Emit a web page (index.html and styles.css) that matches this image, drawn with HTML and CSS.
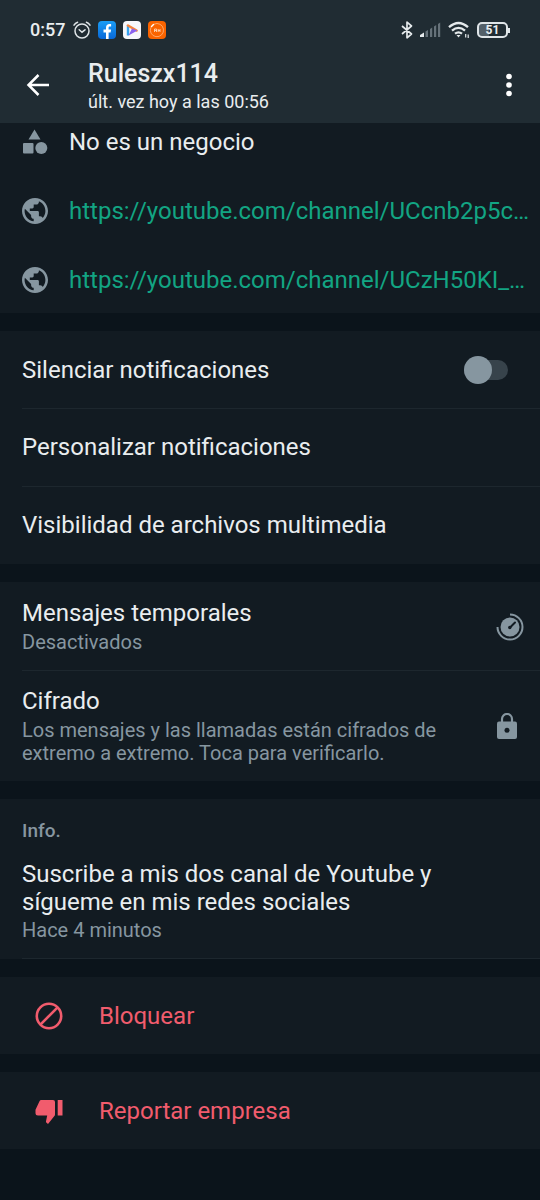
FILE: index.html
```html
<!DOCTYPE html>
<html lang="es">
<head>
<meta charset="utf-8">
<meta name="viewport" content="width=device-width, initial-scale=1">
<title>Ruleszx114</title>
<link rel="stylesheet" href="styles.css">
</head>
<body>
<header class="top">
  <div class="status">
    <div class="status-left">
      <span class="clock">0:57</span>
      <svg class="s18" viewBox="0 0 18 18" fill="none" stroke="#dfe5e8" stroke-width="1.5" stroke-linecap="round"><circle cx="9" cy="10" r="7"/><path d="M6.2 8.800 9 11.200l3-2.400M1 4.200Q2.300 2 4.600 1.200M17 4.200Q15.700 2 13.400 1.200"/></svg>
      <svg class="s18" viewBox="0 0 18 18"><defs><linearGradient id="fb" x2="0" y2="1"><stop stop-color="#1a9df5"/><stop offset="1" stop-color="#0868d8"/></linearGradient></defs><rect width="18" height="18" rx="4" fill="url(#fb)"/><path d="M8 18v-6.500H5.500V8.600H8V6.700C8 4.200 9.400 3 11.500 3l1.600.1v2.500h-1.200c-1 0-1.300.5-1.300 1.300v1.700h2.500l-.5 2.900h-2V18z" fill="#fff"/></svg>
      <svg class="s18" viewBox="0 0 18 18"><rect width="18" height="18" rx="4" fill="#f7f7fa"/><path d="M5 4v10.500" stroke="#36a4ee" stroke-width="2.400"/><path d="M5 4.500 13.500 9.500" stroke="#f5843c" stroke-width="2.600" stroke-linecap="round"/><path d="M5.500 14.500 14.500 9.500 9 7.500z" fill="#8b62ef"/></svg>
      <svg class="s18" viewBox="0 0 18 18"><rect width="18" height="18" rx="4" fill="#fa6400"/><path d="M6 3.200a6.600 6.600 0 1 1-3 3" fill="none" stroke="#ffb880" stroke-width=".8"/><path d="M3.500 5.500 5.500 3.500" stroke="#fff" stroke-width="1.500" stroke-linecap="round"/><path d="M6.500 11V8h2v3M6.500 9.500h2M10.200 8v3M12 8v3M10.200 9.500H12" fill="none" stroke="#ffe0c5" stroke-width=".8"/></svg>
    </div>
    <div class="status-right">
      <svg class="bt" viewBox="0 0 12 18" fill="none" stroke="#e4e9eb" stroke-width="1.700" stroke-linejoin="round"><path d="M1 5l9.500 8L6 16.800V1.200L10.500 5 1 13"/></svg>
      <svg class="signal" viewBox="0 0 21 16"><path d="M0 15v-2l4-2.500V15z" fill="#e4e9eb"/><path d="M5.500 9.500 8 8v7H5.500zM10 7l2.200-1.500V15H10zM14 4.500 16.200 3v12H14zM18 2l2.200-1.500V15H18z" fill="#66727a"/></svg>
      <svg class="wifi" viewBox="0 0 22 18" fill="none" stroke="#e4e9eb" stroke-width="2.300"><path d="M1 6.200q9.500-8.500 19 0M4 9.700q6.500-5.600 13 0M7 12.700q3.500-2.600 7 0"/><path d="M8.500 14h4L10.500 16.500z" fill="#e4e9eb" stroke="none"/><path d="M17.700 13v3.500M20.200 13.500V17" stroke-width="1.200"/></svg>
      <span class="battery"><span class="battery-body">51</span><span class="battery-tip"></span></span>
    </div>
  </div>
  <div class="bar">
    <button class="icon-btn" aria-label="Atrás"><svg class="back" viewBox="0 0 24 24" fill="none" stroke="#fff" stroke-width="2.500"><path d="M23 12H3M12.500 2 2.500 12l10 10"/></svg></button>
    <div class="who"><h1 class="name">Ruleszx114</h1><p class="seen">últ. vez hoy a las 00:56</p></div>
    <button class="icon-btn" aria-label="Más opciones"><svg class="more" viewBox="0 0 6 24" fill="#fff"><circle cx="3" cy="3.500" r="2.800"/><circle cx="3" cy="12" r="2.800"/><circle cx="3" cy="20.500" r="2.800"/></svg></button>
  </div>
</header>
<main class="content">
  <section class="card details">
    <div class="detail"><svg class="s26" viewBox="0 0 26 26" fill="#8696a0"><path d="M12.500 0.500 18.500 10.500h-12z"/><rect x="1" y="14" width="10.500" height="10.500" rx="1"/><circle cx="19.300" cy="19" r="6"/></svg><span>No es un negocio</span></div>
    <div class="detail"><svg class="s26" viewBox="2 2 20 20" fill="#8696a0"><path d="M12 2C6.480 2 2 6.480 2 12s4.480 10 10 10 10-4.480 10-10S17.520 2 12 2zm-1 17.930c-3.950-.49-7-3.850-7-7.930 0-.62.080-1.210.21-1.790L9 15v1c0 1.100.9 2 2 2v1.930zm6.900-2.540c-.26-.81-1-1.390-1.900-1.390h-1v-3c0-.55-.45-1-1-1H8v-2h2c.55 0 1-.45 1-1V7h2c1.100 0 2-.9 2-2v-.41c2.930 1.190 5 4.060 5 7.410 0 2.080-.8 3.970-2.100 5.390z"/></svg><a class="link" href="#">https://youtube.com/channel/UCcnb2p5c…</a></div>
    <div class="detail"><svg class="s26" viewBox="2 2 20 20" fill="#8696a0"><path d="M12 2C6.480 2 2 6.480 2 12s4.480 10 10 10 10-4.480 10-10S17.520 2 12 2zm-1 17.930c-3.950-.49-7-3.850-7-7.930 0-.62.080-1.210.21-1.790L9 15v1c0 1.100.9 2 2 2v1.930zm6.900-2.540c-.26-.81-1-1.390-1.900-1.390h-1v-3c0-.55-.45-1-1-1H8v-2h2c.55 0 1-.45 1-1V7h2c1.100 0 2-.9 2-2v-.41c2.930 1.190 5 4.060 5 7.410 0 2.080-.8 3.970-2.100 5.390z"/></svg><a class="link" href="#">https://youtube.com/channel/UCzH50KI_…</a></div>
  </section>
  <section class="card">
    <label class="row" for="mute"><span>Silenciar notificaciones</span><input class="switch" id="mute" type="checkbox" role="switch"></label>
    <button class="row">Personalizar notificaciones</button>
    <button class="row">Visibilidad de archivos multimedia</button>
  </section>
  <section class="card">
    <button class="row two-line"><span class="texts"><span>Mensajes temporales</span><span class="sub">Desactivados</span></span><svg class="timer" viewBox="0 0 28 28"><path d="M14 1.500A12.500 12.500 0 1 1 1.500 14" fill="none" stroke="#8696a0" stroke-width="2"/><circle cx="14" cy="14" r="9.500" fill="#8696a0"/><path d="M14 14.500 19 9.500" stroke="#121b22" stroke-width="2" stroke-linecap="round"/><circle cx="13.800" cy="14.500" r="1.700" fill="#121b22"/></svg></button>
    <button class="row two-line"><span class="texts"><span>Cifrado</span><span class="sub">Los mensajes y las llamadas están cifrados de extremo a extremo. Toca para verificarlo.</span></span><svg class="lock" viewBox="0 0 20 26"><path d="M5 10V6a5 5 0 0 1 10 0v4" fill="none" stroke="#8696a0" stroke-width="2.200"/><rect y="8.500" width="20" height="17.500" rx="2" fill="#8696a0"/><circle cx="10" cy="17.300" r="2.500" fill="#121b22"/></svg></button>
  </section>
  <section class="card info">
    <h2 class="label">Info.</h2>
    <p class="about">Suscribe a mis dos canal de Youtube y sígueme en mis redes sociales</p>
    <p class="sub">Hace 4 minutos</p>
  </section>
  <section class="card"><button class="row danger"><svg class="s28" viewBox="0 0 28 28" fill="none" stroke="#f15c6d" stroke-width="2.600"><circle cx="14" cy="14" r="12.200"/><path d="M5.400 22.600 22.600 5.400"/></svg>Bloquear</button></section>
  <section class="card"><button class="row danger"><svg class="s28" viewBox="0 0 28 28" fill="#f15c6d"><path d="M6.200 3H18q2 0 2 2v12.500q0 1-.8 1.800L13 27l-1.700-1.400q-.5-.5-.3-1.300l1.200-5.800H3Q.5 18.500.5 16v-3.200L4.500 4.200Q5 3 6.200 3zM22.700 3H27.500v15.500h-4.800z"/></svg>Reportar empresa</button></section>
</main>
</body>
</html>
```
FILE: styles.css
```css
* { box-sizing: border-box; }

body {
  margin: 0;
  background: #0b141b;
  color: #e9edef;
  font: 24px/28px Roboto, "Liberation Sans", sans-serif;
}

h1, h2, p { margin: 0; }
svg { display: block; flex: none; }

button {
  border: 0;
  background: none;
  color: inherit;
  font: inherit;
  text-align: left;
  cursor: pointer;
}

.top { background: #202c33; padding-bottom: 7px; }

.status {
  display: flex;
  align-items: center;
  justify-content: space-between;
  height: 60px;
  padding: 0 30px;
}

.status-left, .status-right { display: flex; align-items: center; }
.status-left { gap: 7px; }
.status-right { gap: 7px; }
.clock { margin-right: 1px; font-size: 18px; font-weight: 500; }
.s18 { width: 18px; height: 18px; }
.bt { width: 12px; height: 18px; }
.signal { width: 21px; height: 16px; }
.wifi { width: 22px; height: 18px; }
.battery { display: flex; align-items: center; }

.battery-body {
  width: 31px;
  height: 16px;
  border: 2px solid #dfe5e8;
  border-radius: 5px;
  background: linear-gradient(90deg, #536069 10px, transparent 10px);
  font-size: 12px;
  font-weight: 700;
  line-height: 12px;
  text-align: center;
}

.battery-tip { width: 2px; height: 5px; background: #dfe5e8; }

.bar {
  display: flex;
  align-items: center;
  padding: 0 28px 0 26px;
}

.icon-btn { padding: 0 0 6px; }
.back { width: 24px; height: 24px; }
.more { width: 6px; height: 24px; }
.who { flex: 1; padding-left: 38px; }
.name { font-size: 25px; line-height: 28px; font-weight: 500; }
.seen { font-size: 18px; line-height: 28px; }

.content { display: grid; gap: 18px; }
.card { background: #121b22; }

.details {
  display: grid;
  gap: 41px;
  padding: 5px 8px 19px 22px;
}

.detail { display: flex; align-items: center; gap: 21px; min-width: 0; }
.s26 { width: 26px; height: 26px; }

.link {
  flex: 1;
  min-width: 0;
  overflow: hidden;
  color: #12a583;
  text-decoration: none;
  text-overflow: ellipsis;
  white-space: nowrap;
}

.row {
  display: flex;
  align-items: center;
  justify-content: space-between;
  width: 100%;
  min-height: 77px;
  padding: 0 32px 0 22px;
}

.row + .row {
  min-height: 78px;
  background: linear-gradient(#1d272e, #1d272e) 22px 0 / 100% 1px no-repeat;
}

.switch {
  appearance: none;
  display: flex;
  align-items: center;
  width: 44px;
  height: 20px;
  margin: 0;
  background: #37434b;
  border-radius: 10px;
}

.switch::before {
  content: "";
  flex: none;
  width: 28px;
  height: 28px;
  border-radius: 50%;
  background: #8696a0;
}

.switch:checked { justify-content: flex-end; }

.two-line { padding: 17px 16px 16px 22px; }
.texts { display: grid; gap: 4px; max-width: 430px; }
.sub { color: #8696a0; font-size: 20px; line-height: 23px; }
.timer { width: 28px; height: 28px; }
.lock { width: 20px; height: 26px; margin-right: 7px; }

.info {
  padding: 20px 22px 17px;
  background: linear-gradient(#1d272e, #1d272e) 22px 100% / 100% 1px no-repeat #121b22;
}

.label { color: #8696a0; font-size: 19px; line-height: 24px; font-weight: 500; }
.about { padding: 17px 60px 3px 0; }

.danger {
  justify-content: flex-start;
  gap: 36px;
  padding-left: 35px;
  color: #f15c6d;
}

.s28 { width: 28px; height: 28px; }
```
